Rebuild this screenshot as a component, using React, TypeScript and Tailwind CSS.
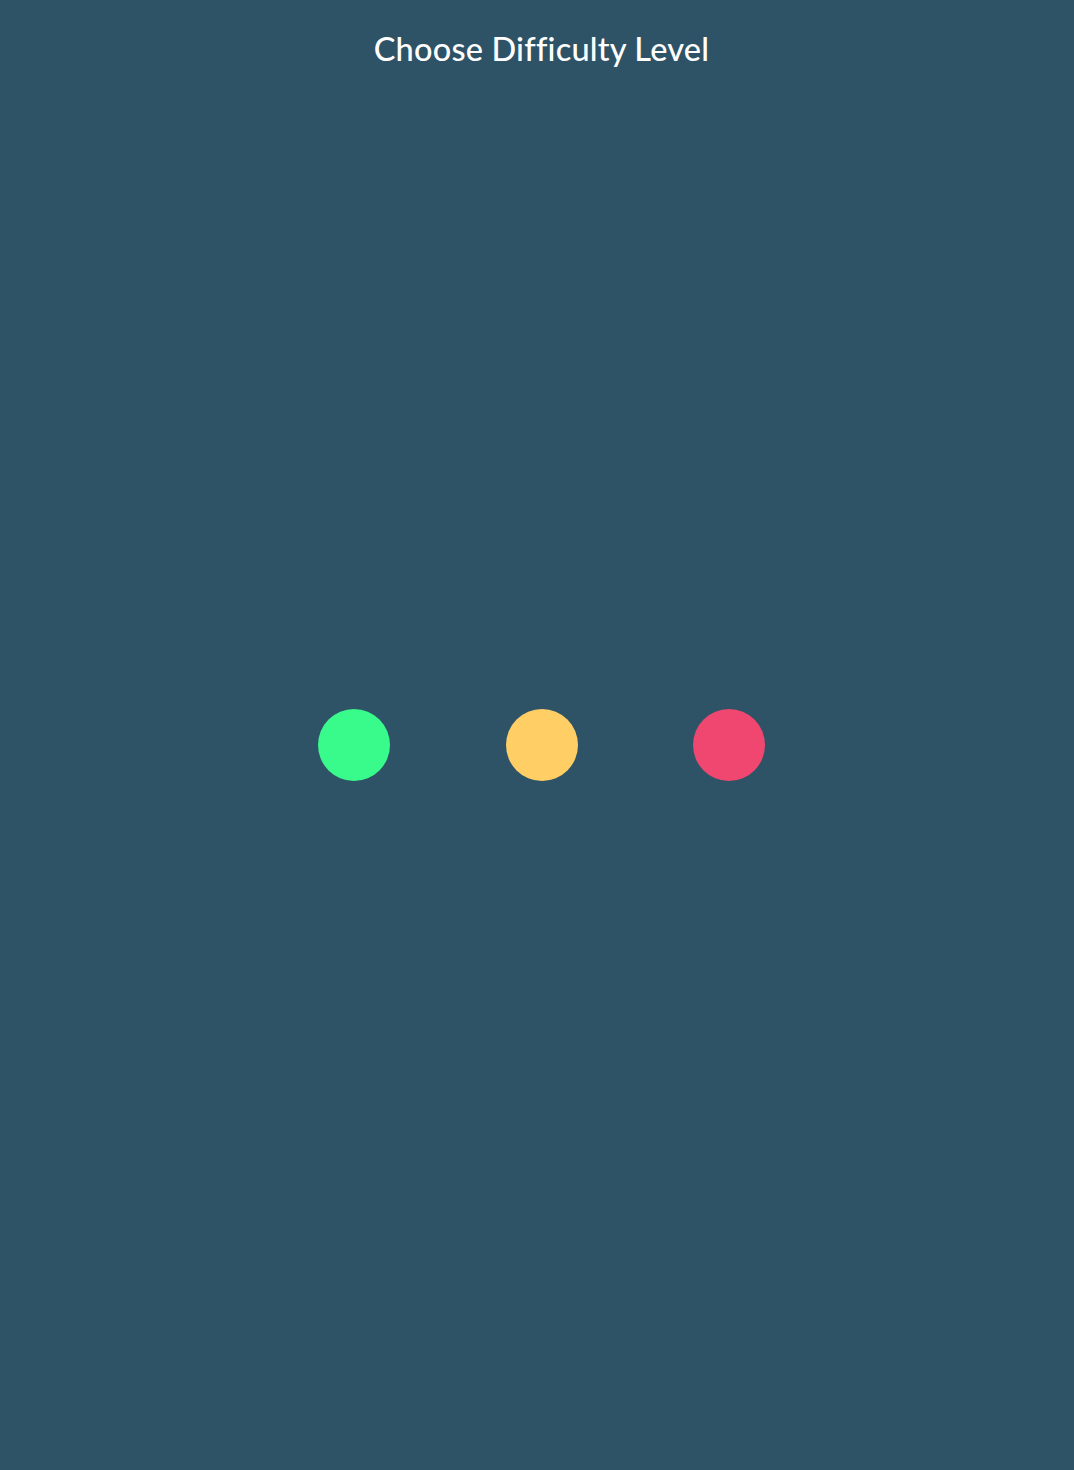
import React from 'react';

const levels = [
  { id: 'easy', color: 'bg-[#39fb8b]' },
  { id: 'medium', color: 'bg-[#ffcf66]' },
  { id: 'hard', color: 'bg-[#ef476f]' },
];

export default function App() {
  return (
    <div className="min-h-screen flex flex-col bg-[#2e5367] pl-[9px] text-white" style={{ fontFamily: 'Lato, "Noto Sans", sans-serif' }}>
      <h1 className="pt-[28px] text-center text-[32.5px] leading-[42px] font-medium tracking-[0.2px]">
        Choose Difficulty Level
      </h1>

      {/* difficulty picker */}
      <div className="flex flex-1 items-center justify-center gap-[115.5px] pb-[50px]">
        {levels.map((level) => (
          <button
            key={level.id}
            aria-label={level.id}
            className={`h-[72px] w-[72px] rounded-full ${level.color}`}
          />
        ))}
      </div>
    </div>
  );
}
